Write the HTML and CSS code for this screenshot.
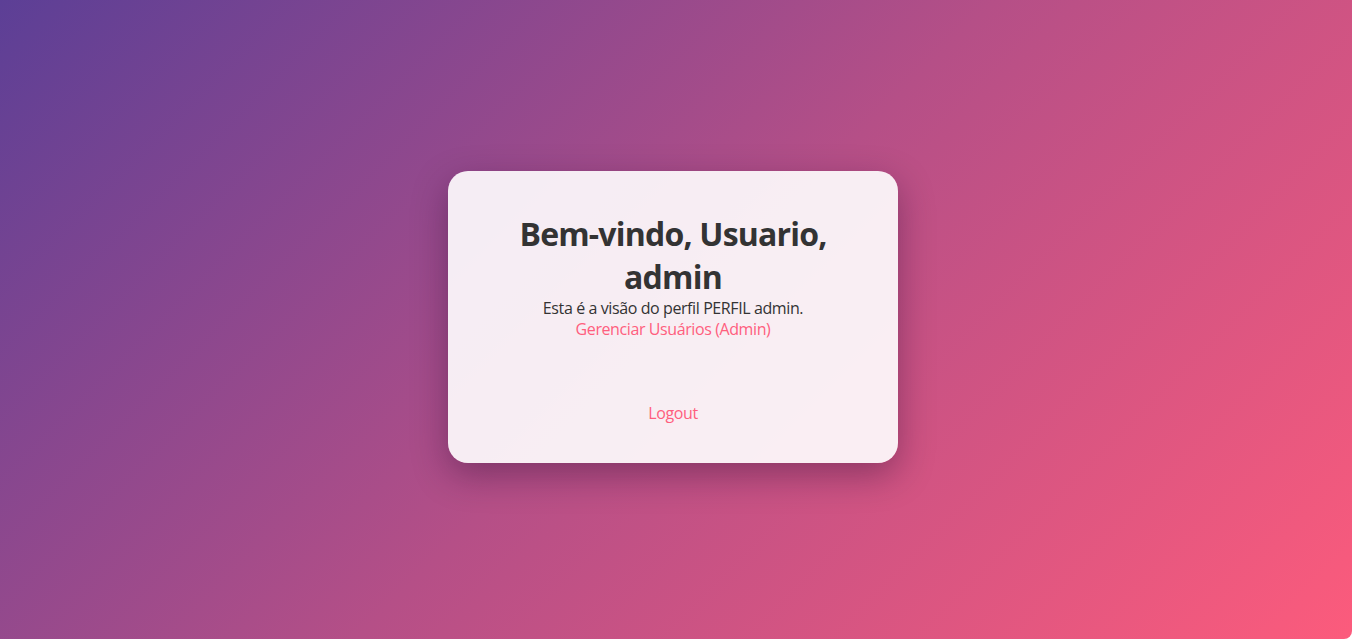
FILE: index.html
```html
<!DOCTYPE html>
<html lang="pt-BR">
<head>
<meta charset="utf-8">
<title>Dashboard</title>
<link rel="stylesheet" href="styles.css">
</head>
<body>
<div class="page">
  <main class="card">
    <h1 class="title">Bem-vindo, Usuario, admin</h1>
    <p class="info">Esta é a visão do perfil PERFIL admin.</p>
    <a class="link" href="#">Gerenciar Usuários (Admin)</a>
    <a class="logout" href="#">Logout</a>
  </main>
</div>
</body>
</html>
```
FILE: styles.css
```css
html, body {
  margin: 0;
  padding: 0;
  background: #ffffff;
}

.page {
  width: 1352px;
  height: 639px;
  box-sizing: border-box;
  padding: 0 6px 5px 0;
  background: linear-gradient(135deg, #5c3f96 0%, #b54f87 50%, #fc5b7c 100%);
  border-bottom-right-radius: 8px;
  display: flex;
  align-items: center;
  justify-content: center;
  font-family: "Open Sans", "Noto Sans", sans-serif;
  overflow: hidden;
}

.card {
  width: 450px;
  box-sizing: border-box;
  padding: 41px 40px 39px;
  background: rgba(255, 255, 255, 0.9);
  border-radius: 20px;
  box-shadow: 0 12px 35px rgba(40, 10, 50, 0.38);
  display: flex;
  flex-direction: column;
  align-items: center;
  text-align: center;
}

.title {
  margin: 0;
  font-size: 32px;
  line-height: 43px;
  font-weight: 700;
  letter-spacing: -0.8px;
  color: #333333;
}

.info {
  margin: 0;
  font-size: 16px;
  line-height: 21px;
  letter-spacing: -0.4px;
  color: #333333;
}

.link {
  font-size: 16px;
  line-height: 21px;
  letter-spacing: -0.4px;
  color: #ff5e7e;
  text-decoration: none;
}

.logout {
  margin-top: 63px;
  font-size: 16px;
  line-height: 21px;
  letter-spacing: -0.4px;
  color: #ff5e7e;
  text-decoration: none;
}
```
